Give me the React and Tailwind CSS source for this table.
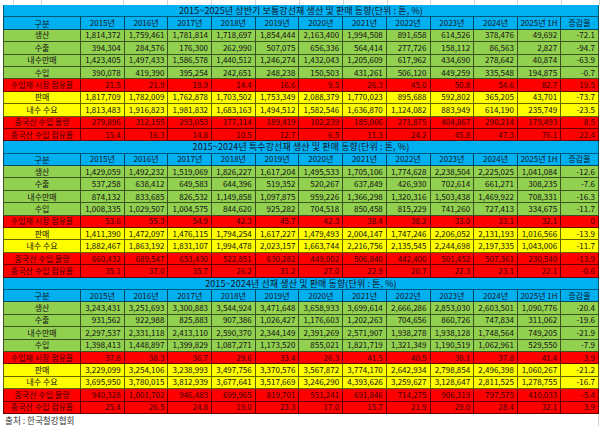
import React from "react";

const labels = [
  "생산",
  "수출",
  "내수만매",
  "수입",
  "수입재 시장 점유율",
  "판매",
  "내수 수요",
  "중국산 수입 물량",
  "중국산 수입 점유율",
];

const rowTone = ["green", "green", "green", "green", "red", "yellow", "yellow", "red", "red"];

const tones = {
  green: "bg-[#92d050] text-[#111]",
  yellow: "bg-[#ffff00] text-[#111]",
  red: "bg-[#ff0000] text-[#3d0000]",
};

const years = ["2015년", "2016년", "2017년", "2018년", "2019년", "2020년", "2021년", "2022년", "2023년", "2024년", "2025년 1H", "증감율"];

const sections = [
  {
    title: "2015~2025년 상반기 보통강선재 생산 및 판매 동향(단위 : 톤, %)",
    rows: [
      ["1,814,372", "1,759,461", "1,781,814", "1,718,697", "1,854,444", "2,163,400", "1,994,508", "891,658", "614,526", "378,476", "49,692", "-72.1"],
      ["394,304", "284,576", "176,300", "262,990", "507,075", "656,336", "564,414", "277,726", "158,112", "86,563", "2,827", "-94.7"],
      ["1,423,405", "1,497,433", "1,586,578", "1,440,512", "1,246,274", "1,432,043", "1,205,609", "617,962", "434,690", "278,642", "40,874", "-63.9"],
      ["390,078", "419,390", "395,254", "242,651", "248,238", "150,503", "431,261", "506,120", "449,259", "335,548", "194,875", "-0.7"],
      ["21.5", "21.9", "19.9", "14.4", "16.6", "9.5", "26.3", "45.0", "50.8", "54.6", "82.7", "19.5"],
      ["1,817,709", "1,782,009", "1,762,878", "1,703,502", "1,753,349", "2,088,379", "1,770,023", "895,688", "592,802", "365,205", "43,701", "-73.7"],
      ["1,813,483", "1,916,823", "1,981,832", "1,683,163", "1,494,512", "1,582,546", "1,636,870", "1,124,082", "883,949", "614,190", "235,749", "-23.5"],
      ["279,896", "312,155", "293,053", "177,114", "189,419", "102,239", "185,006", "271,875", "404,867", "290,214", "179,493", "8.5"],
      ["15.4", "16.3", "14.8", "10.5", "12.7", "6.5", "11.3", "24.2", "45.8", "47.3", "76.1", "22.4"],
    ],
  },
  {
    title: "2015~2024년 특수강선재 생산 및 판매 동향(단위 : 톤, %)",
    rows: [
      ["1,429,059", "1,492,232", "1,519,069", "1,826,227", "1,617,204", "1,495,533", "1,705,106", "1,774,628", "2,238,504", "2,225,025", "1,041,084", "-12.6"],
      ["537,258", "638,412", "649,583", "644,396", "519,352", "520,267", "637,849", "426,930", "702,614", "661,271", "308,235", "-7.6"],
      ["874,132", "833,685", "826,532", "1,149,858", "1,097,875", "959,226", "1,366,298", "1,320,316", "1,503,438", "1,469,922", "708,331", "-16.3"],
      ["1,008,335", "1,029,507", "1,004,575", "844,620", "925,282", "704,518", "850,458", "815,229", "741,260", "727,413", "334,675", "-11.7"],
      ["53.6", "55.3", "54.9", "42.3", "45.7", "42.3", "38.4", "38.2", "33.0", "33.1", "32.1", "0"],
      ["1,411,390", "1,472,097", "1,476,115", "1,794,254", "1,617,227", "1,479,493", "2,004,147", "1,747,246", "2,206,052", "2,131,193", "1,016,566", "-13.9"],
      ["1,882,467", "1,863,192", "1,831,107", "1,994,478", "2,023,157", "1,663,744", "2,216,756", "2,135,545", "2,244,698", "2,197,335", "1,043,006", "-11.7"],
      ["660,432", "689,547", "653,430", "522,851", "630,282", "449,002", "506,840", "442,400", "501,452", "507,361", "230,540", "-13.9"],
      ["35.1", "37.0", "35.7", "26.2", "31.2", "27.0", "22.9", "20.7", "22.3", "23.1", "22.1", "-0.6"],
    ],
  },
  {
    title: "2015~2024년 선재 생산 및 판매 동향(단위 : 톤, %)",
    rows: [
      ["3,243,431", "3,251,693", "3,300,883", "3,544,924", "3,471,648", "3,658,933", "3,699,614", "2,666,286", "2,853,030", "2,603,501", "1,090,776", "-20.4"],
      ["931,562", "922,988", "825,883", "907,386", "1,026,427", "1,176,603", "1,202,263", "704,656", "860,726", "747,834", "311,062", "-19.6"],
      ["2,297,537", "2,331,118", "2,413,110", "2,590,370", "2,344,149", "2,391,269", "2,571,907", "1,938,278", "1,938,128", "1,748,564", "749,205", "-21.9"],
      ["1,398,413", "1,448,897", "1,399,829", "1,087,271", "1,173,520", "855,021", "1,821,719", "1,321,349", "1,190,519", "1,062,961", "529,550", "-7.9"],
      ["37.8", "38.3", "36.7", "29.6", "33.4", "26.3", "41.5", "40.5", "38.1", "37.8", "41.4", "3.9"],
      ["3,229,099", "3,254,106", "3,238,993", "3,497,756", "3,370,576", "3,567,872", "3,774,170", "2,642,934", "2,798,854", "2,496,398", "1,060,267", "-21.2"],
      ["3,695,950", "3,780,015", "3,812,939", "3,677,641", "3,517,669", "3,246,290", "4,393,626", "3,259,627", "3,128,647", "2,811,525", "1,278,755", "-16.7"],
      ["940,328", "1,001,702", "946,483", "699,965", "819,701", "551,241", "691,846", "714,275", "906,319", "797,575", "410,033", "-5.4"],
      ["25.4", "26.5", "24.8", "19.0", "23.3", "17.0", "15.7", "21.9", "29.0", "28.4", "32.1", "3.9"],
    ],
  },
];

const gridCols = "grid grid-cols-[78px_repeat(10,43.7px)_43.3px_37.7px]";
const cell = "h-[12.4px] border-r border-b border-black/60 flex items-center leading-none";

function Section({ title, rows }) {
  return (
    <div className={gridCols}>
      <div className="col-span-13 h-[12.4px] bg-[#00b0f0] border-x border-b border-black/50 flex items-center justify-center text-[9px] tracking-[0.1px] text-[#141428] leading-none">
        {title}
      </div>
      {["구분", ...years].map((y, i) => (
        <div
          key={y}
          className={`${cell} justify-center bg-[#00b0f0] text-[#141428] ${i === 0 ? "border-l text-[8.5px]" : ""}`}
        >
          {y}
        </div>
      ))}
      {rows.map((row, r) => (
        <React.Fragment key={r}>
          <div className={`${cell} border-l justify-center ${tones[rowTone[r]]}`}>{labels[r]}</div>
          {row.map((v, c) => (
            <div key={c} className={`${cell} justify-end pr-[3px] ${tones[rowTone[r]]}`}>
              {v}
            </div>
          ))}
        </React.Fragment>
      ))}
    </div>
  );
}

export default function App() {
  const gridLines = [14, 28, 82, 44, 44, 44, 44, 44, 44, 43, 44, 43, 44, 38];
  return (
    <div className="w-[600px] h-[426px] bg-white overflow-hidden pl-[3px] font-['Noto_Sans_CJK_KR',sans-serif] text-[8px]">
      <div className="flex h-[5px] -ml-[3px]">
        {gridLines.map((w, i) => (
          <div key={i} style={{ width: w }} className="h-full border-r border-[#d4d4d4]" />
        ))}
      </div>
      {sections.map((s) => (
        <Section key={s.title} title={s.title} rows={s.rows} />
      ))}
      <div className="w-[596px] h-[13px] flex items-center pl-[2px] text-[8.6px] text-[#333] border-r border-[#cfcfcf]">
        출처 : 한국철강협회
      </div>
    </div>
  );
}
